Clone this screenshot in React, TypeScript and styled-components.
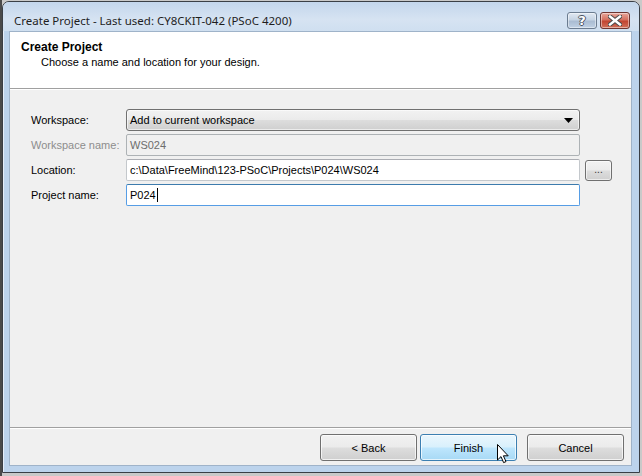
import React from "react";
import styled, { createGlobalStyle } from "styled-components";

const GlobalStyle = createGlobalStyle`
  html, body {
    margin: 0;
    padding: 0;
    background: #c9c9c9;
    font-family: "Liberation Sans", Arial, sans-serif;
  }
  #root {
    width: 642px;
    height: 476px;
    overflow: hidden;
  }
`;

export default function App() {
  return (
    <>
      <GlobalStyle />
      <Desktop>
        <Window>
          <TitleBar>
            <TitleText>Create Project - Last used: CY8CKIT-042 (PSoC 4200)</TitleText>
            <CaptionButtons>
              <CaptionButton kind="help">
                <CaptionGlyph>?</CaptionGlyph>
              </CaptionButton>
              <CaptionButton kind="close">
                <svg width="14" height="11" viewBox="0 0 14 11">
                  <path
                    d="M2 1.5 L12 9.5 M12 1.5 L2 9.5"
                    stroke="#4a4a4a"
                    strokeWidth="4.4"
                    strokeLinecap="square"
                  />
                  <path
                    d="M2 1.5 L12 9.5 M12 1.5 L2 9.5"
                    stroke="#ffffff"
                    strokeWidth="2.4"
                    strokeLinecap="square"
                  />
                </svg>
              </CaptionButton>
            </CaptionButtons>
          </TitleBar>

          <Client>
            <Header>
              <HeaderTitle>Create Project</HeaderTitle>
              <HeaderSub>Choose a name and location for your design.</HeaderSub>
            </Header>
            <Etched />

            <Form>
              <Row>
                <Label>Workspace:</Label>
                <Combo>
                  <span>Add to current workspace</span>
                  <svg width="9" height="5" viewBox="0 0 9 5">
                    <path d="M0 0 H9 L4.5 5 Z" fill="#000" />
                  </svg>
                </Combo>
              </Row>
              <Row>
                <Label disabled>Workspace name:</Label>
                <TextBox disabled>WS024</TextBox>
              </Row>
              <Row>
                <Label>Location:</Label>
                <TextBox>c:\Data\FreeMind\123-PSoC\Projects\P024\WS024</TextBox>
                <BrowseButton>...</BrowseButton>
              </Row>
              <Row>
                <Label>Project name:</Label>
                <TextBox focused>
                  P024<Caret />
                </TextBox>
              </Row>
            </Form>

            <Etched />
            <Footer>
              <ButtonGroup>
                <PushButton>&lt; Back</PushButton>
                <PushButton hot>
                  Finish
                  <Cursor width="13" height="20" viewBox="0 0 13 20">
                    <path
                      d="M0.5 0.5 L0.5 16 L4 12.6 L6.6 18.6 L9 17.6 L6.4 11.8 L11.2 11.8 Z"
                      fill="#fff"
                      stroke="#000"
                      strokeWidth="1"
                      strokeLinejoin="miter"
                    />
                  </Cursor>
                </PushButton>
              </ButtonGroup>
              <PushButton>Cancel</PushButton>
            </Footer>
          </Client>
        </Window>
      </Desktop>
    </>
  );
}

const Desktop = styled.div`
  width: 642px;
  height: 476px;
  padding: 1px 0 0 2px;
  box-sizing: border-box;
  background: linear-gradient(90deg, #4a4a4a 0, #4a4a4a 2px, #c9c9c9 2px);
`;

const Window = styled.div`
  width: 638px;
  height: 472px;
  box-sizing: border-box;
  border: 1px solid #3a3f46;
  border-radius: 7px 7px 0 0;
  background: #bcd3ec;
  display: flex;
  flex-direction: column;
  padding: 0 7px 6px 6px;
  box-shadow: inset 1px 1px 0 #e6eef8;
`;

const TitleBar = styled.div`
  height: 29px;
  flex: none;
  display: flex;
  align-items: flex-start;
  justify-content: space-between;
  margin: 0 -7px 0 -6px;
  padding: 0 9px 0 11px;
  border-radius: 6px 6px 0 0;
  background: linear-gradient(#c3d6ec, #d6e3f2 60%, #cfdff0);
`;

const TitleText = styled.div`
  font-family: "Noto Sans", "Liberation Sans", sans-serif;
  font-size: 11.5px;
  color: #1e1e1e;
  margin-top: 11px;
  line-height: 16px;
`;

const CaptionButtons = styled.div`
  display: flex;
  gap: 3px;
  margin-top: 10px;
`;

const CaptionButton = styled.div<{ kind: "help" | "close" }>`
  width: 30px;
  height: 17px;
  box-sizing: border-box;
  border-radius: 3px;
  display: flex;
  align-items: center;
  justify-content: center;
  border: 1px solid ${(p) => (p.kind === "close" ? "#6e3531" : "#6b7c90")};
  background: ${(p) =>
    p.kind === "close"
      ? "linear-gradient(#e8a79b, #d4705f 45%, #c24532 55%, #d0705a)"
      : "linear-gradient(#e1e9f3, #c6d4e4 45%, #aabcd2 55%, #c0d1e4)"};
  box-shadow: inset 0 0 0 1px rgba(255, 255, 255, 0.45);
`;

const CaptionGlyph = styled.span`
  font-family: "DejaVu Sans", sans-serif;
  font-weight: bold;
  font-size: 13px;
  line-height: 13px;
  color: #fff;
  text-shadow: 1px 0 0 #4c5563, -1px 0 0 #4c5563, 0 1px 0 #4c5563,
    0 -1px 0 #4c5563;
`;

const Client = styled.div`
  flex: 1;
  display: flex;
  flex-direction: column;
  background: #f0f0f0;
  border: 1px solid #9fb3c9;
  font-size: 11px;
  color: #000;
`;

const Header = styled.div`
  height: 56px;
  flex: none;
  background: #fff;
  box-sizing: border-box;
  padding: 8px 0 0 11px;
`;

const HeaderTitle = styled.div`
  font-weight: bold;
  font-size: 12px;
  line-height: 15px;
`;

const HeaderSub = styled.div`
  font-size: 11px;
  line-height: 14px;
  margin-left: 20px;
`;

const Etched = styled.div`
  height: 1px;
  flex: none;
  background: #a0a0a0;
  border-bottom: 1px solid #fff;
`;

const Form = styled.div`
  flex: 1;
  display: flex;
  flex-direction: column;
  gap: 3px;
  padding: 19px 0 0 21px;
`;

const Row = styled.div`
  display: flex;
  align-items: center;
  height: 22px;
`;

const Label = styled.div<{ disabled?: boolean }>`
  width: 95px;
  flex: none;
  color: ${(p) => (p.disabled ? "#8d8d8d" : "#000")};
`;

const Combo = styled.div`
  width: 454px;
  height: 22px;
  box-sizing: border-box;
  display: flex;
  align-items: center;
  justify-content: space-between;
  padding: 0 6px 0 3px;
  border: 1px solid #707070;
  border-radius: 3px;
  background: linear-gradient(#f2f2f2, #ebebeb 48%, #dddddd 52%, #cfcfcf);
  box-shadow: inset 0 0 0 1px rgba(255, 255, 255, 0.6);
`;

const TextBox = styled.div<{ disabled?: boolean; focused?: boolean }>`
  width: 454px;
  height: 22px;
  box-sizing: border-box;
  display: flex;
  align-items: center;
  padding: 0 3px;
  border: 1px solid
    ${(p) => (p.focused ? "#569de5" : p.disabled ? "#adb2b5" : "#c4c8cc")};
  border-top-color: ${(p) =>
    p.focused ? "#3d7bad" : p.disabled ? "#adb2b5" : "#abadb3"};
  border-radius: 2px;
  background: ${(p) => (p.disabled ? "#f0f0f0" : "#fff")};
  color: ${(p) => (p.disabled ? "#6d6d6d" : "#000")};
`;

const Caret = styled.span`
  display: inline-block;
  width: 1px;
  height: 14px;
  background: #000;
  margin-left: 1px;
`;

const BrowseButton = styled.div`
  width: 27px;
  height: 21px;
  box-sizing: border-box;
  margin-left: 5px;
  display: flex;
  align-items: center;
  justify-content: center;
  padding-bottom: 2px;
  font-size: 10px;
  color: #333;
  border: 1px solid #707070;
  border-radius: 3px;
  background: linear-gradient(#f2f2f2, #ebebeb 48%, #dddddd 52%, #cfcfcf);
  box-shadow: inset 0 0 0 1px rgba(255, 255, 255, 0.6);
`;

const Footer = styled.div`
  height: 36px;
  flex: none;
  display: flex;
  justify-content: flex-end;
  align-items: flex-start;
  gap: 10px;
  box-sizing: border-box;
  padding: 5px 7px 0 0;
`;

const ButtonGroup = styled.div`
  display: flex;
  gap: 3px;
`;

const PushButton = styled.div<{ hot?: boolean }>`
  position: relative;
  width: 97px;
  height: 27px;
  box-sizing: border-box;
  display: flex;
  align-items: center;
  justify-content: center;
  font-size: 11px;
  color: #000;
  border: 1px solid ${(p) => (p.hot ? "#3c7fb1" : "#707070")};
  border-radius: 3px;
  background: ${(p) =>
    p.hot
      ? "linear-gradient(#eaf6fd, #d9f0fc 48%, #bee6fd 52%, #a7d9f5)"
      : "linear-gradient(#f2f2f2, #ebebeb 48%, #dddddd 52%, #cfcfcf)"};
  box-shadow: inset 0 0 0 1px rgba(255, 255, 255, 0.7);
`;

const Cursor = styled.svg`
  position: absolute;
  left: 76px;
  top: 9px;
`;
